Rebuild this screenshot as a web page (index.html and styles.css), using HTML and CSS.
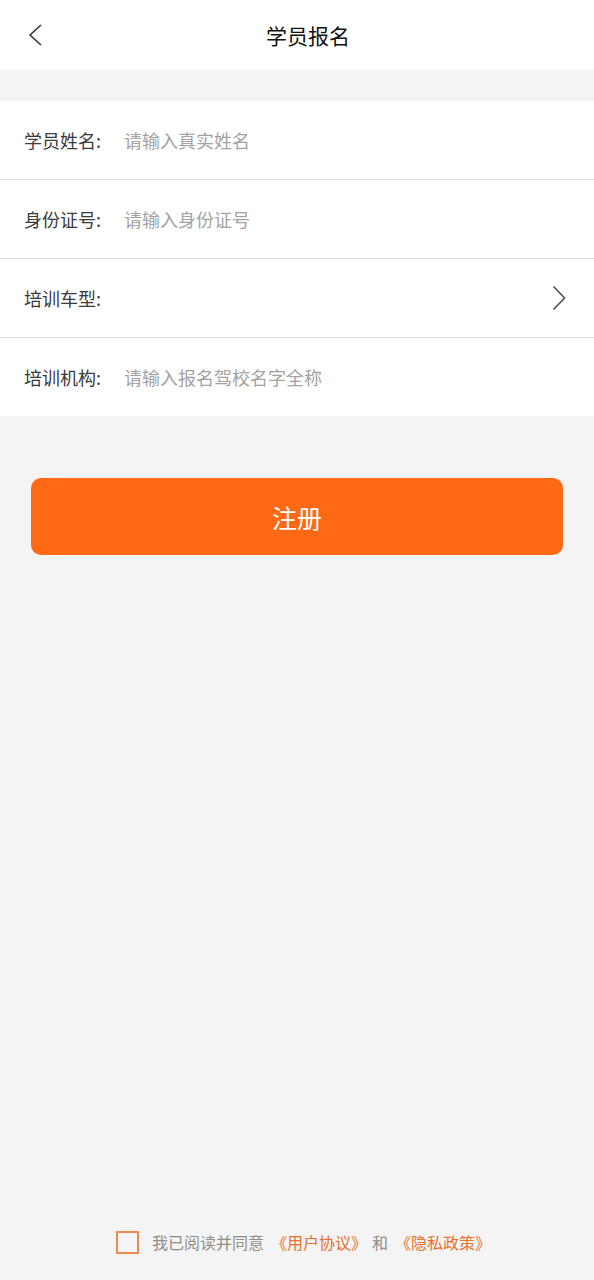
FILE: index.html
```html
<!DOCTYPE html>
<html lang="zh-CN">
<head>
<meta charset="utf-8">
<title>学员报名</title>
<link rel="stylesheet" href="styles.css">
</head>
<body>
<div class="page">
  <header class="nav">
    <svg class="back" width="22" height="24" viewBox="0 0 22 24"><path d="M17 2 L6 12 L17 22" fill="none" stroke="#333" stroke-width="1.6" stroke-linejoin="miter"/></svg>
    <h1 class="title">学员报名</h1>
  </header>

  <section class="form">
    <div class="row">
      <span class="label">学员姓名:</span>
      <input class="field" type="text" placeholder="请输入真实姓名">
    </div>
    <div class="row">
      <span class="label">身份证号:</span>
      <input class="field" type="text" placeholder="请输入身份证号">
    </div>
    <div class="row">
      <span class="label">培训车型:</span>
      <span class="spacer"></span>
      <svg class="chev" width="14" height="26" viewBox="0 0 14 26"><path d="M1.5 1.5 L12.5 13 L1.5 24.5" fill="none" stroke="#555" stroke-width="1.7"/></svg>
    </div>
    <div class="row">
      <span class="label">培训机构:</span>
      <input class="field" type="text" placeholder="请输入报名驾校名字全称">
    </div>
  </section>

  <button class="submit" type="button">注册</button>

  <footer class="agree">
    <span class="box"></span>
    <span class="txt">我已阅读并同意</span>
    <span class="link">《用户协议》</span>
    <span class="txt">和</span>
    <span class="link">《隐私政策》</span>
  </footer>
</div>
</body>
</html>
```

FILE: styles.css
```css
html, body {
  margin: 0;
  padding: 0;
}
body {
  background: #f4f4f4;
  font-family: "Noto Sans CJK SC", "Noto Sans", sans-serif;
}
.page {
  min-height: 1280px;
  display: flex;
  flex-direction: column;
}
.nav {
  height: 70px;
  background: #fff;
  display: flex;
  align-items: center;
  padding-left: 24px;
  box-sizing: border-box;
}
.back {
  flex: none;
  display: block;
}
.title {
  flex: 1;
  margin: 0;
  padding-right: 24px;
  text-align: center;
  font-size: 21px;
  font-weight: 400;
  color: #111;
}
.form {
  margin-top: 31px;
  background: #fff;
}
.row {
  height: 78px;
  display: flex;
  align-items: center;
  padding: 0 28px 0 24px;
  border-bottom: 1px solid #dcdcdc;
}
.row:last-child {
  border-bottom: none;
}
.label {
  width: 100px;
  flex: none;
  font-size: 18px;
  color: #3a3a3a;
}
.field {
  flex: 1;
  border: none;
  outline: none;
  background: transparent;
  padding: 0;
  font-family: inherit;
  font-size: 18px;
  color: #333;
}
.field::placeholder {
  color: #a3a3a3;
}
.spacer {
  flex: 1;
}
.chev {
  display: block;
}
.submit {
  margin: 62px 31px 0;
  height: 77px;
  border: none;
  border-radius: 10px;
  background: #ff6914;
  color: #fff;
  font-family: inherit;
  font-size: 25px;
  padding: 0;
}
.agree {
  margin-top: auto;
  padding: 0 0 26px 116px;
  display: flex;
  align-items: center;
  font-size: 16px;
  height: 24px;
}
.box {
  flex: none;
  width: 19px;
  height: 19px;
  border: 2px solid #f08a50;
  margin-right: 13px;
}
.txt {
  color: #8e8e8e;
}
.link {
  color: #e8722e;
  margin: 0 5px 0 7px;
}
```
